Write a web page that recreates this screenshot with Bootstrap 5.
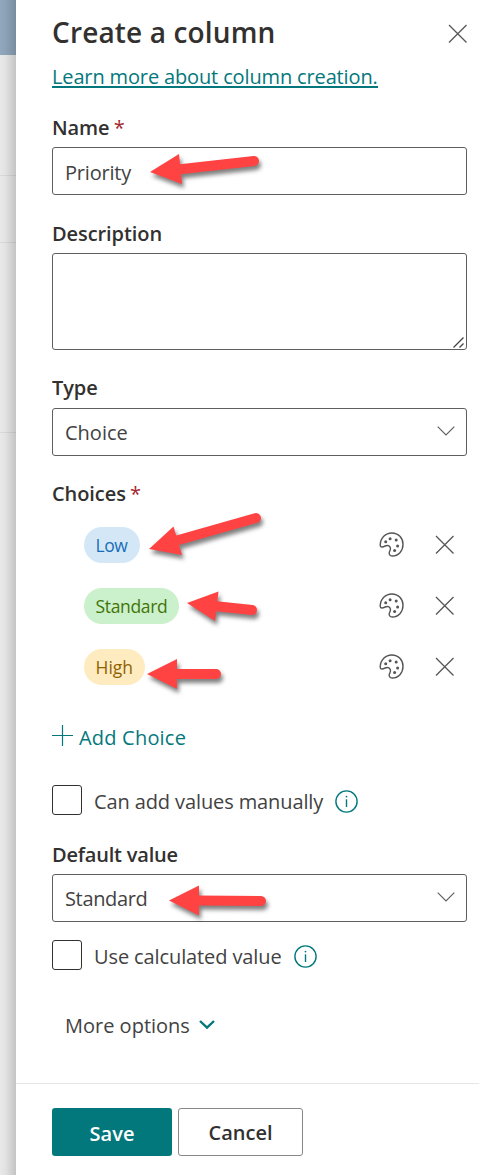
<!DOCTYPE html>
<html lang="en">
<head>
<meta charset="utf-8">
<meta name="viewport" content="width=device-width, initial-scale=1">
<title>Create a column</title>
<link href="https://cdn.jsdelivr.net/npm/bootstrap@5.3.0/dist/css/bootstrap.min.css" rel="stylesheet">
<style>
body{font-family:"Open Sans","Noto Sans",sans-serif;font-size:20px;line-height:30px;color:#424242;width:479px;height:1175px;overflow:hidden;background:#fff}
.page-edge{width:16px;flex:none;background:#e9e9e9;position:relative}
.page-edge::after{content:"";position:absolute;inset:0;background:linear-gradient(90deg,rgba(0,0,0,0) 0,rgba(0,0,0,.03) 35%,rgba(0,0,0,.16) 100%)}
.edge-head{height:55px;background:#90a7bd}
.edge-row{border-bottom:1px solid #dadada}
.panel{width:463px;padding-left:36px;position:relative}
.panel-body{height:1083px;padding-right:12px}
.panel h1{font-size:28px;line-height:40px;font-weight:570;color:#323130;padding-top:12px;margin:0}
.learn{color:#03787c;height:30px;display:block;text-decoration:none}
.learn span{display:inline-block;height:27px;line-height:29px;border-bottom:2px solid #03787c;white-space:nowrap}
.field-label{display:block;font-weight:570;color:#323130;height:30px;line-height:32px;letter-spacing:-.08px;white-space:nowrap}
.field-label i{font-style:normal;font-weight:400;color:#a4262c;margin-left:-1px}
.form-control,.field-select{border:1px solid #605e5c;border-radius:3px;height:48px;padding:2px 12px 0;font-size:20px;color:#424242;background:#fff}
.form-control,.field-select span{letter-spacing:-.2px}
.field-select svg{margin-right:-1px;margin-top:-5px}
textarea.form-control{height:97px;resize:none;display:block}
.choice-row{height:36px;margin-bottom:25px;padding-left:32px}
.choice-row svg:first-of-type{position:relative;left:-.7px;top:-.6px}
.pill{height:36px;border-radius:18px;padding:0 11.5px;font-size:17.5px;line-height:36px;white-space:nowrap}
.p-low{background:#d4e7f6;color:#1570b8;width:56px;letter-spacing:-.5px}
.p-std{background:#caf0cc;color:#437406;width:95px;letter-spacing:-.33px}
.p-high{background:#ffebc0;color:#8f6200;width:61px}
.teal{color:#03787c}
.check{width:30px;height:30px;border:1px solid #323130;border-radius:3px;margin-right:12px;flex:none}
.check-text{height:30px;line-height:32px;padding-top:1px;letter-spacing:-.11px}
.footer-bar{border-top:1px solid #e5e5e5;height:92px;margin-left:-36px;padding:24px 0 0 36px;gap:6px}
.footer-bar .btn{height:48px;border-radius:3px;padding:0;font-size:20px;font-weight:570;line-height:50px}
.btn-save{width:120px;background:#03787c;color:#fff}
.btn-cancel{width:125px;border:1px solid #8a8886;color:#323130}
.marks{position:absolute;left:0;top:0;pointer-events:none;filter:drop-shadow(2px 4px 2px rgba(0,0,0,.5))}
</style>
</head>
<body class="d-flex position-relative">
<svg width="0" height="0" class="position-absolute">
<defs>
<g id="cross" fill="none" stroke="#555" stroke-width="1.25"><path d="M1 1 18.500 18.500M18.500 1 1 18.500"/></g>
<g id="chev" fill="none" stroke="#605e5c" stroke-width="1.15"><path d="M.7.7 9 9 17.300.7"/></g>
<g id="palette"><path d="M1.200 12.800C1.500 6 6.500 1 12.800 1 19.500 1 24 6 24 12.300 24 19 19.500 24 13.200 24 10.800 24 9.800 22.200 10.300 20.300 10.800 18.700 11.800 17.600 11.400 16 10.800 13.400 8.400 13 6.200 14 4.300 14.900 1.100 16.100 1.200 12.800Z" fill="none" stroke="#555" stroke-width="1.4"/><g fill="#555"><circle cx="6.700" cy="9.700" r="1.500"/><circle cx="11.100" cy="6.700" r="1.500"/><circle cx="17.200" cy="8.100" r="1.500"/><circle cx="18.600" cy="14" r="1.500"/><circle cx="15.600" cy="18.600" r="1.500"/></g></g>
<g id="info"><circle cx="11.500" cy="11.500" r="10.600" fill="none" stroke="#03787c" stroke-width="1.400"/><path d="M11.500 9.300V17" stroke="#03787c" stroke-width="1.400"/><circle cx="11.500" cy="6.600" r=".9" fill="#03787c"/></g>
</defs>
</svg>
<div class="page-edge h-100">
<div class="edge-head"></div>
<div class="edge-row" style="height:121px"></div>
<div class="edge-row" style="height:67px"></div>
<div class="edge-row" style="height:190px"></div>
</div>
<main class="panel">
<div class="panel-body">
<div class="d-flex justify-content-between">
<h1><span style="letter-spacing:.15px">Create a column</span></h1>
<svg width="20" height="20" style="margin-top:24px;margin-right:-1px"><use href="#cross"/></svg>
</div>
<a class="learn" href="#" style="margin-top:9px"><span style="letter-spacing:-.14px;line-height:31px">Learn more about column creation.</span></a>
<label class="field-label" style="margin-top:21px;margin-bottom:5px">Name <i>*</i></label>
<input class="form-control" value="Priority">
<label class="field-label" style="margin-top:23px;margin-bottom:5px">Description</label>
<div class="position-relative"><textarea class="form-control"></textarea>
<svg class="position-absolute bottom-0 end-0" width="16" height="16" fill="none" stroke="#444" stroke-width="1.300"><path d="M2.500 13.500 12.500 3.500M8.500 13.500 12.500 9.500"/></svg></div>
<label class="field-label" style="margin-top:22px;margin-bottom:6px">Type</label>
<div class="field-select d-flex align-items-center justify-content-between"><span style="letter-spacing:0">Choice</span><svg width="18" height="10"><use href="#chev"/></svg></div>
<label class="field-label" style="margin-top:22px;margin-bottom:19px">Choices <i>*</i></label>
<div class="choice-row d-flex align-items-center"><span class="pill p-low">Low</span><svg class="ms-auto" width="25" height="25"><use href="#palette"/></svg><svg width="20" height="20" style="margin:0 12px 0 30px"><use href="#cross"/></svg></div>
<div class="choice-row d-flex align-items-center"><span class="pill p-std">Standard</span><svg class="ms-auto" width="25" height="25"><use href="#palette"/></svg><svg width="20" height="20" style="margin:0 12px 0 30px"><use href="#cross"/></svg></div>
<div class="choice-row d-flex align-items-center"><span class="pill p-high">High</span><svg class="ms-auto" width="25" height="25"><use href="#palette"/></svg><svg width="20" height="20" style="margin:0 12px 0 30px"><use href="#cross"/></svg></div>
<div class="teal d-flex" style="margin-top:37px;height:30px"><svg width="22" height="22" style="margin:3px 5px 0 0" stroke="#03787c" stroke-width="1.200"><path d="M0 10.500H21M10.500 0V21"/></svg><span style="line-height:32px;letter-spacing:.2px">Add Choice</span></div>
<div class="d-flex" style="margin-top:33px;height:30px"><span class="check"></span><span class="check-text">Can add values manually</span><svg width="23" height="23" style="margin:5px 0 0 12px"><use href="#info"/></svg></div>
<label class="field-label" style="margin-top:24px;margin-bottom:5px;letter-spacing:-.2px">Default value</label>
<div class="field-select d-flex align-items-center justify-content-between"><span style="letter-spacing:-.35px">Standard</span><svg width="18" height="10"><use href="#chev"/></svg></div>
<div class="d-flex" style="margin-top:18px;height:30px"><span class="check"></span><span class="check-text">Use calculated value</span><svg width="23" height="23" style="margin:5px 0 0 12px"><use href="#info"/></svg></div>
<div class="d-flex align-items-center" style="margin-top:41px;height:30px;padding-left:13px"><span>More options</span><svg width="16" height="12" style="margin-left:9px;margin-top:-2px" fill="none" stroke="#03787c" stroke-width="2.400"><path d="M1 2 8 8.700 15 2"/></svg></div>
</div>
<div class="footer-bar d-flex"><button class="btn btn-save">Save</button><button class="btn btn-cancel" style="line-height:48px">Cancel</button></div>
</main>
<svg class="marks" width="479" height="1175" fill="#ff4343" stroke="#ff4343" stroke-linecap="round">
<g stroke="none"><path d="M150 172 179 154 182 184Z"/><path d="M149 549 173.500 526.500 182 555Z"/><path d="M187 603 218.500 591.500 215 621Z"/><path d="M147 674 177 659V689Z"/><path d="M169 900.500 199 885.500V915.500Z"/></g>
<g stroke-width="10"><path d="M178 169.500 254 161"/><path d="M175 541 256 518"/><path d="M214 606 252 610"/><path d="M174 674H216"/><path d="M196 900.500 261 901"/></g>
</svg>
<script src="https://cdn.jsdelivr.net/npm/bootstrap@5.3.0/dist/js/bootstrap.bundle.min.js"></script>
</body>
</html>
